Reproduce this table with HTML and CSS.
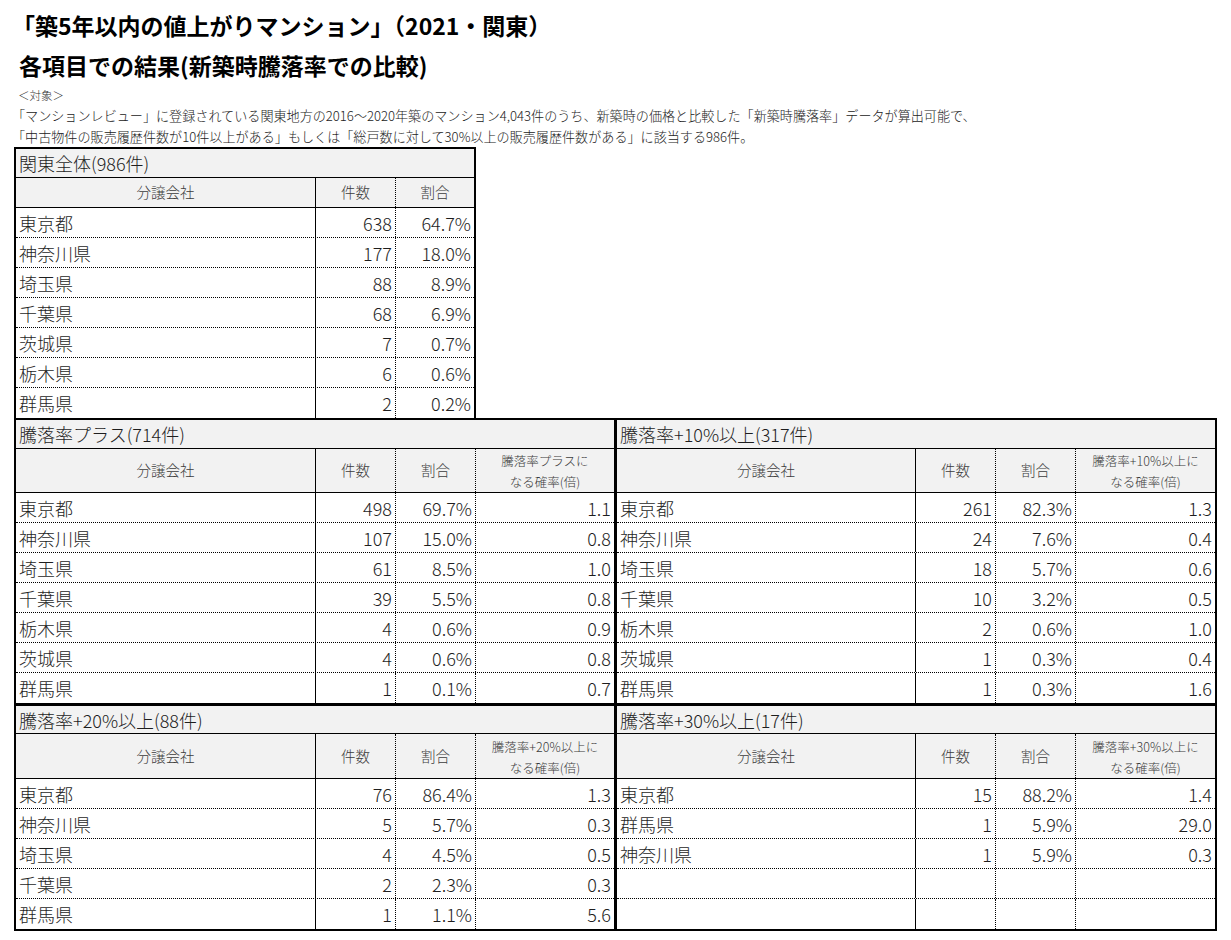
FILE: index.html
```html
<!DOCTYPE html>
<html lang="ja">
<head>
<meta charset="utf-8">
<title>築5年以内の値上がりマンション（2021・関東）</title>
<link rel="stylesheet" href="styles.css">
</head>
<body>
<div class="page">
  <header class="intro">
    <h1 class="title1">「築5年以内の値上がりマンション」（2021・関東）</h1>
    <h2 class="title2">各項目での結果(新築時騰落率での比較)</h2>
    <p class="label">＜対象＞</p>
    <p class="desc">「マンションレビュー」に登録されている関東地方の2016〜2020年築のマンション4,043件のうち、新築時の価格と比較した「新築時騰落率」データが算出可能で、</p>
    <p class="desc">「中古物件の販売履歴件数が10件以上がある」もしくは「総戸数に対して30%以上の販売履歴件数がある」に該当する986件。</p>
  </header>

  <section class="block top3">
    <div class="row cap"><div class="cell">関東全体(986件)</div></div>
    <div class="row head"><div class="cell">分譲会社</div><div class="cell">件数</div><div class="cell">割合</div></div>
    <div class="row"><div class="cell">東京都</div><div class="cell n">638</div><div class="cell n">64.7%</div></div>
    <div class="row"><div class="cell">神奈川県</div><div class="cell n">177</div><div class="cell n">18.0%</div></div>
    <div class="row"><div class="cell">埼玉県</div><div class="cell n">88</div><div class="cell n">8.9%</div></div>
    <div class="row"><div class="cell">千葉県</div><div class="cell n">68</div><div class="cell n">6.9%</div></div>
    <div class="row"><div class="cell">茨城県</div><div class="cell n">7</div><div class="cell n">0.7%</div></div>
    <div class="row"><div class="cell">栃木県</div><div class="cell n">6</div><div class="cell n">0.6%</div></div>
    <div class="row"><div class="cell">群馬県</div><div class="cell n">2</div><div class="cell n">0.2%</div></div>
  </section>

  <div class="lower">
    <section class="block left upper">
      <div class="row cap"><div class="cell">騰落率プラス(714件)</div></div>
      <div class="row head"><div class="cell">分譲会社</div><div class="cell">件数</div><div class="cell">割合</div><div class="cell two">騰落率プラスに<br>なる確率(倍)</div></div>
      <div class="row"><div class="cell">東京都</div><div class="cell n">498</div><div class="cell n">69.7%</div><div class="cell n">1.1</div></div>
      <div class="row"><div class="cell">神奈川県</div><div class="cell n">107</div><div class="cell n">15.0%</div><div class="cell n">0.8</div></div>
      <div class="row"><div class="cell">埼玉県</div><div class="cell n">61</div><div class="cell n">8.5%</div><div class="cell n">1.0</div></div>
      <div class="row"><div class="cell">千葉県</div><div class="cell n">39</div><div class="cell n">5.5%</div><div class="cell n">0.8</div></div>
      <div class="row"><div class="cell">栃木県</div><div class="cell n">4</div><div class="cell n">0.6%</div><div class="cell n">0.9</div></div>
      <div class="row"><div class="cell">茨城県</div><div class="cell n">4</div><div class="cell n">0.6%</div><div class="cell n">0.8</div></div>
      <div class="row"><div class="cell">群馬県</div><div class="cell n">1</div><div class="cell n">0.1%</div><div class="cell n">0.7</div></div>
    </section>

    <section class="block right upper">
      <div class="row cap"><div class="cell">騰落率+10%以上(317件)</div></div>
      <div class="row head"><div class="cell">分譲会社</div><div class="cell">件数</div><div class="cell">割合</div><div class="cell two">騰落率+10%以上に<br>なる確率(倍)</div></div>
      <div class="row"><div class="cell">東京都</div><div class="cell n">261</div><div class="cell n">82.3%</div><div class="cell n">1.3</div></div>
      <div class="row"><div class="cell">神奈川県</div><div class="cell n">24</div><div class="cell n">7.6%</div><div class="cell n">0.4</div></div>
      <div class="row"><div class="cell">埼玉県</div><div class="cell n">18</div><div class="cell n">5.7%</div><div class="cell n">0.6</div></div>
      <div class="row"><div class="cell">千葉県</div><div class="cell n">10</div><div class="cell n">3.2%</div><div class="cell n">0.5</div></div>
      <div class="row"><div class="cell">栃木県</div><div class="cell n">2</div><div class="cell n">0.6%</div><div class="cell n">1.0</div></div>
      <div class="row"><div class="cell">茨城県</div><div class="cell n">1</div><div class="cell n">0.3%</div><div class="cell n">0.4</div></div>
      <div class="row"><div class="cell">群馬県</div><div class="cell n">1</div><div class="cell n">0.3%</div><div class="cell n">1.6</div></div>
    </section>

    <section class="block left lowerrow">
      <div class="row cap"><div class="cell">騰落率+20%以上(88件)</div></div>
      <div class="row head"><div class="cell">分譲会社</div><div class="cell">件数</div><div class="cell">割合</div><div class="cell two">騰落率+20%以上に<br>なる確率(倍)</div></div>
      <div class="row"><div class="cell">東京都</div><div class="cell n">76</div><div class="cell n">86.4%</div><div class="cell n">1.3</div></div>
      <div class="row"><div class="cell">神奈川県</div><div class="cell n">5</div><div class="cell n">5.7%</div><div class="cell n">0.3</div></div>
      <div class="row"><div class="cell">埼玉県</div><div class="cell n">4</div><div class="cell n">4.5%</div><div class="cell n">0.5</div></div>
      <div class="row"><div class="cell">千葉県</div><div class="cell n">2</div><div class="cell n">2.3%</div><div class="cell n">0.3</div></div>
      <div class="row"><div class="cell">群馬県</div><div class="cell n">1</div><div class="cell n">1.1%</div><div class="cell n">5.6</div></div>
    </section>

    <section class="block right lowerrow">
      <div class="row cap"><div class="cell">騰落率+30%以上(17件)</div></div>
      <div class="row head"><div class="cell">分譲会社</div><div class="cell">件数</div><div class="cell">割合</div><div class="cell two">騰落率+30%以上に<br>なる確率(倍)</div></div>
      <div class="row"><div class="cell">東京都</div><div class="cell n">15</div><div class="cell n">88.2%</div><div class="cell n">1.4</div></div>
      <div class="row"><div class="cell">群馬県</div><div class="cell n">1</div><div class="cell n">5.9%</div><div class="cell n">29.0</div></div>
      <div class="row"><div class="cell">神奈川県</div><div class="cell n">1</div><div class="cell n">5.9%</div><div class="cell n">0.3</div></div>
      <div class="row"><div class="cell"></div><div class="cell n"></div><div class="cell n"></div><div class="cell n"></div></div>
      <div class="row"><div class="cell"></div><div class="cell n"></div><div class="cell n"></div><div class="cell n"></div></div>
    </section>
  </div>
</div>
</body>
</html>
```

FILE: styles.css
```css
* { box-sizing: border-box; }

html, body { margin: 0; padding: 0; background: #fff; }

body {
  font-family: "Noto Sans CJK JP", "Noto Sans", sans-serif;
  color: #1e1e1e;
}

.page {
  padding: 5px 0 0 12px;
  width: 1231px;
}

/* ---------- intro ---------- */
.intro h1, .intro h2, .intro p { margin: 0; }

.title1 {
  font-size: 23px;
  font-weight: 700;
  line-height: 40px;
  color: #000;
}

.title2 {
  font-size: 23px;
  font-weight: 700;
  line-height: 40px;
  color: #000;
  padding-left: 7px;
}

.label {
  font-size: 11.5px;
  line-height: 20px;
  padding-left: 6px;
  color: #333;
  font-weight: 300;
}

.desc {
  font-size: 13.1px;
  line-height: 21px;
  color: #222;
  font-weight: 300;
}

/* ---------- blocks ---------- */
.block {
  display: flex;
  flex-direction: column;
}

.top3 {
  margin-left: 2px;
  width: 462px;
  border: 2px solid #000;
  border-bottom: 0;
}

.top3 .row:not(.cap) { grid-template-columns: 300px 80px 1fr; }

.lower {
  margin-left: 2px;
  width: 1203px;
  border: 2px solid #000;
  display: grid;
  grid-template-columns: 601px 598px;
}

.left { border-right: 3px solid #000; }
.left .row:not(.cap) { grid-template-columns: 300px 80px 80px 1fr; }
.right .row:not(.cap) { grid-template-columns: 299px 80px 80px 1fr; }
.upper { border-bottom: 3px solid #000; }

/* ---------- rows ---------- */
.row {
  display: grid;
  height: 30px;
  border-bottom: 1px dotted #000;
  font-size: 18px;
  font-weight: 300;
}

.row:last-child { border-bottom: 0; }

.row.cap {
  grid-template-columns: 1fr;
  height: 29px;
  background: #f2f2f2;
  border-bottom: 1px solid #000;
}
.lowerrow .row.cap { height: 28px; }

.row.head {
  background: #f2f2f2;
  border-bottom: 1px solid #000;
  font-size: 14.5px;
  color: #3c3c3c;
}
.left .row.head, .right .row.head { height: 44px; }
.lowerrow .row.head { height: 45px; }

/* ---------- cells ---------- */
.cell {
  display: flex;
  align-items: center;
  padding: 0 3px 0 3px;
  white-space: nowrap;
  line-height: 1;
}

.row:not(.cap) .cell:first-child { border-right: 1px solid #000; }
.row:not(.cap) .cell + .cell:not(:last-child) { border-right: 1px dotted #000; }

.row.head .cell { justify-content: center; text-align: center; }

.cell.two {
  font-size: 12.5px;
  line-height: 21px;
  padding-top: 1px;
}

.cell.n { justify-content: flex-end; }
```
